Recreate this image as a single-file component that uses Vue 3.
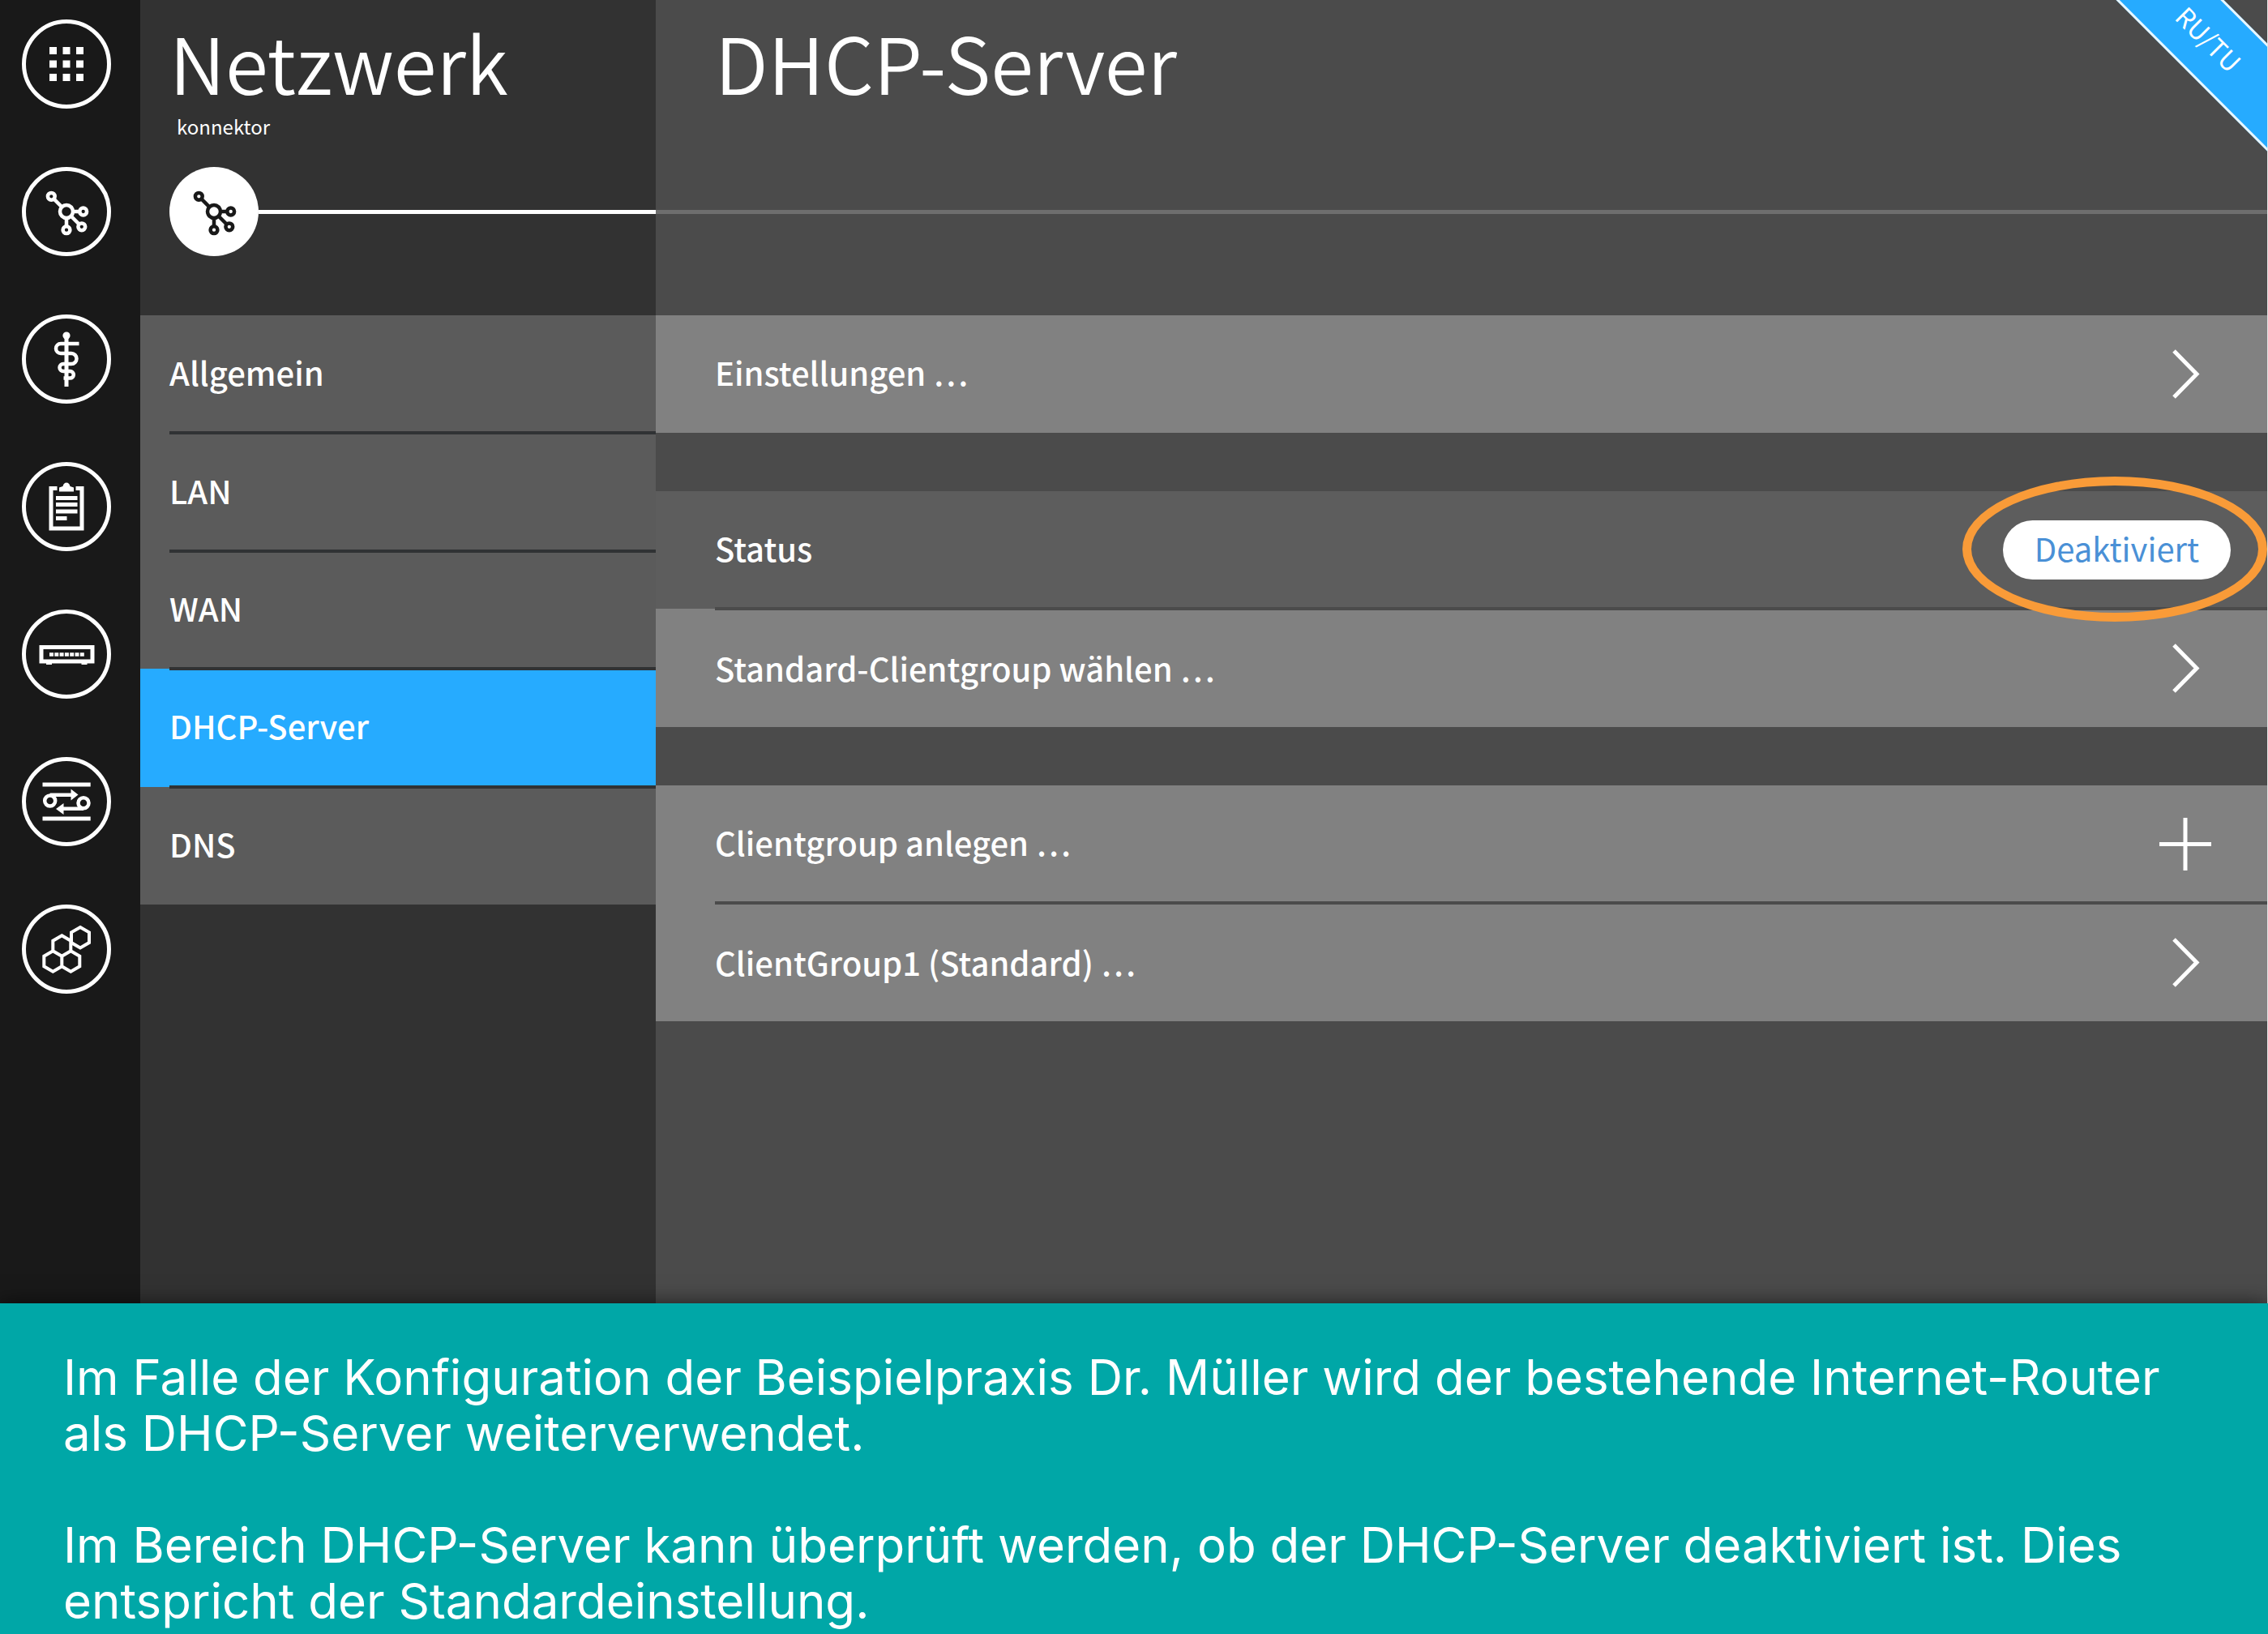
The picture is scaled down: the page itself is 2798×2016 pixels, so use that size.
<script setup>
import { h } from 'vue'

const hex = (cx, cy, r = 12.7) => {
  const w = r * 0.866
  return `M${cx} ${cy - r}L${cx + w} ${cy - r / 2}V${cy + r / 2}L${cx} ${cy + r}L${cx - w} ${cy + r / 2}V${cy - r / 2}Z`
}

const stroke = (d, width = 4) => ({ d, fill: 'none', stroke: 'currentColor', 'stroke-width': width })
const solid = (d) => ({ d, fill: 'currentColor' })
const ring = (cx, cy, r) => `M${cx - r} ${cy}a${r} ${r} 0 1 0 ${2 * r} 0a${r} ${r} 0 1 0 ${-2 * r} 0Z`

const icons = {
  apps: [solid([34, 50.5, 67].flatMap((y) => [34, 50.5, 67].map((x) => `M${x} ${y}h9v9h-9Z`)).join(''))],
  network: [
    stroke(ring(55, 55, 8), 4.5),
    stroke(ring(36.3, 36.3, 4.4) + ring(75.7, 55, 4.4) + ring(73.8, 73.8, 4.4) + ring(55, 77.7, 4.4), 4.5),
    stroke('M39.5 39.5L49 49M63 55H71.5M61 61L70.5 70.5M55 63V73.5', 4.5),
  ],
  medical: [
    solid(ring(55, 26, 4.6)),
    stroke('M55 26V89', 5),
    stroke('M70.5 36H48a6 6 0 0 0 0 12H61a6.5 6.5 0 0 1 0 13H51a4.5 4.5 0 0 0 0 9H59.5a4.3 4.3 0 0 1 0 8.6H51.5', 4.5),
  ],
  protocol: [
    stroke('M43.5 32.5H36V82H74V32.5H66.5', 5),
    solid('M46 36.5V31.5L50.5 30Q51.5 25.5 55 25.5T59.5 30L64 31.5V36.5Z'),
    stroke('M42 44.5H68.5M42 52.5H68.5M42 61H68.5M42 69.5H55.5', 5),
  ],
  device: [
    stroke('M24 46.5H87V64H24Z', 5),
    solid('M30 66h7v2h-7ZM73.5 66h7v2h-7Z'),
    { ...stroke('M34 55.5H77', 4.5), 'stroke-dasharray': '5 1.3' },
  ],
  transfer: [
    stroke('M25.5 34H84.7M25.5 76H84.7', 5),
    stroke(ring(34.7, 54, 6.5) + ring(76, 56.7, 6.5), 4.5),
    stroke('M34.7 46.7H62M76 63.7H50', 4.5),
    solid('M60.5 39.5L69.5 46.5L60.5 53.5ZM51.5 57L42 64L51.5 71Z'),
  ],
  cluster: [stroke(hex(72, 40.7) + hex(49.3, 51) + hex(38.3, 70) + hex(60.3, 70), 4)],
}

const Icon = (props) =>
  h('svg', { viewBox: '0 0 110 110', 'aria-hidden': 'true' }, icons[props.name].map((attrs) => h('path', attrs)))
Icon.props = ['name']

const modules = [
  { icon: 'apps', label: 'Übersicht' },
  { icon: 'network', label: 'Netzwerk' },
  { icon: 'medical', label: 'Praxis' },
  { icon: 'protocol', label: 'Protokoll' },
  { icon: 'device', label: 'Geräte' },
  { icon: 'transfer', label: 'Dienste' },
  { icon: 'cluster', label: 'System' },
]

const sections = ['Allgemein', 'LAN', 'WAN', 'DHCP-Server', 'DNS']
const current = 'DHCP-Server'

const arrow = 'M18 4L46 32.5L18 61'
const plus = 'M32 0V65M0 32.5H64'
const groups = [
  [{ label: 'Einstellungen …', mark: arrow }],
  [{ label: 'Status', status: 'Deaktiviert' }, { label: 'Standard-Clientgroup wählen …', mark: arrow }],
  [{ label: 'Clientgroup anlegen …', mark: plus }, { label: 'ClientGroup1 (Standard) …', mark: arrow }],
]
</script>

<template>
  <div class="page">
    <div class="console">
      <nav class="rail" aria-label="Module">
        <a v-for="m in modules" :key="m.icon" href="#" class="rail-link" :aria-label="m.label">
          <Icon :name="m.icon" />
        </a>
      </nav>

      <aside class="menu">
        <header class="head">
          <h1 class="title">Netzwerk</h1>
          <p class="host">konnektor</p>
          <div class="track">
            <span class="badge"><Icon name="network" /></span>
            <span class="line"></span>
          </div>
        </header>
        <nav class="sections" aria-label="Netzwerk">
          <a v-for="s in sections" :key="s" href="#" class="section" :class="{ active: s === current }">{{ s }}</a>
        </nav>
      </aside>

      <main class="content">
        <header class="head">
          <h2 class="title">DHCP-Server</h2>
          <div class="track"><span class="line faint"></span></div>
        </header>
        <div class="groups">
          <section v-for="(rows, i) in groups" :key="i" class="group">
            <template v-for="row in rows" :key="row.label">
              <div v-if="row.status" class="row plain">
                <span class="label">{{ row.label }}</span>
                <span class="marked">
                  <button type="button" class="pill">{{ row.status }}</button>
                </span>
              </div>
              <button v-else type="button" class="row">
                <span class="label">{{ row.label }}</span>
                <svg class="mark" viewBox="0 0 64 65" aria-hidden="true"><path :d="row.mark" /></svg>
              </button>
            </template>
          </section>
        </div>
        <div class="corner"><span class="ribbon">RU/TU</span></div>
      </main>
    </div>

    <footer class="caption">
      <p>
        Im Falle der Konfiguration der Beispielpraxis Dr. Müller wird der bestehende Internet-Router<br />
        als DHCP-Server weiterverwendet.
      </p>
      <p>
        Im Bereich DHCP-Server kann überprüft werden, ob der DHCP-Server deaktiviert ist. Dies<br />
        entspricht der Standardeinstellung.
      </p>
    </footer>
  </div>
</template>

<style>
body {
  margin: 0;
  background: #00a7a7;
}
</style>

<style scoped>
.page {
  display: flex;
  flex-direction: column;
  min-height: 100vh;
  color: #fff;
  font-family: "Noto Sans CJK SC", "Noto Sans", sans-serif;
}
.console {
  display: flex;
  flex: 1;
  border-right: 1px solid #e6e6e6;
  background: #4b4b4b;
}
.rail {
  display: flex;
  flex-direction: column;
  align-items: center;
  gap: 72px;
  width: 164px;
  padding: 24px 9px 0 0;
  flex: none;
  background: #191919;
}
.rail-link {
  box-sizing: border-box;
  width: 110px;
  height: 110px;
  border: 5px solid #fff;
  border-radius: 50%;
  color: #fff;
}
.rail-link svg {
  display: block;
  margin: -5px;
}
.menu {
  flex: none;
  width: 636px;
  background: #323232;
}
.head {
  position: relative;
  box-sizing: border-box;
  height: 389px;
  padding: 24px 36px 0;
}
.title,
.host,
.caption p {
  margin: 0;
}
.title {
  font-size: 96px;
  line-height: 104px;
  font-weight: 350;
}
.host {
  padding-left: 9px;
  font-size: 24px;
  line-height: 56px;
}
.track {
  position: absolute;
  left: 0;
  right: 0;
  top: 206px;
  display: flex;
  align-items: center;
  height: 110px;
}
.badge {
  width: 110px;
  height: 110px;
  margin-left: 36px;
  border-radius: 50%;
  background: #fff;
  color: #191919;
}
.badge svg {
  display: block;
}
.line {
  flex: 1;
  height: 5px;
  background: #fff;
}
.faint {
  background: #6e6e6e;
}
.sections {
  display: grid;
  grid-auto-rows: 1fr;
  height: 727px;
}
.section,
.row {
  position: relative;
  display: flex;
  align-items: center;
  color: #fff;
  font-size: 40px;
  font-weight: 500;
}
.section {
  padding: 0 36px 5px;
  background: #5b5b5b;
  text-decoration: none;
}
.section.active {
  background: #26abff;
}
.section + .section::before,
.row + .row::before {
  content: "";
  position: absolute;
  top: -2px;
  right: 0;
  left: 36px;
  height: 4px;
  background: #303234;
}
.row + .row::before {
  left: 73px;
  background: #4b4b4b;
}
.content {
  position: relative;
  flex: 1;
  min-width: 0;
}
.content .head {
  padding-left: 73px;
}
.groups {
  display: flex;
  flex-direction: column;
  gap: 72px;
}
.row {
  box-sizing: border-box;
  justify-content: space-between;
  width: 100%;
  height: 145px;
  padding: 0 69px 0 73px;
  border: 0;
  background: #818181;
  font-family: inherit;
  text-align: left;
}
.row + .row {
  height: 146px;
}
.label {
  padding-bottom: 5px;
}
.row + .row .label {
  padding-bottom: 0;
}
.row.plain {
  padding-right: 45px;
  background: #5d5d5d;
}
.mark {
  width: 64px;
  height: 65px;
  fill: none;
  stroke: #fff;
  stroke-width: 5;
}
.marked {
  position: relative;
  z-index: 1;
}
.marked::after {
  content: "";
  position: absolute;
  inset: -54px -45px -52px -50px;
  border: 11px solid #f99b38;
  border-radius: 50%;
  pointer-events: none;
}
.pill {
  display: block;
  width: 281px;
  height: 73px;
  padding: 0 0 5px;
  border: 0;
  border-radius: 37px;
  background: #fff;
  color: #4a90d6;
  font: 400 40px/68px "Noto Sans CJK SC", "Noto Sans", sans-serif;
}
.corner {
  position: absolute;
  top: 0;
  right: 0;
  width: 240px;
  height: 240px;
  overflow: hidden;
}
.ribbon {
  position: absolute;
  top: 1px;
  right: -128px;
  box-sizing: border-box;
  width: 400px;
  height: 94px;
  border: solid #e8f6ff;
  border-width: 3px 0;
  background: #26abff;
  font-size: 32px;
  line-height: 86px;
  text-align: center;
  transform: rotate(45deg);
}
.caption {
  position: relative;
  display: flex;
  flex-direction: column;
  gap: 69px;
  padding: 57px 78px 6px;
  background: #00a7a7;
  box-shadow: 0 0 24px rgba(0, 0, 0, 0.6);
  font-family: Inter, sans-serif;
  font-size: 60px;
  line-height: 69px;
  white-space: nowrap;
}
</style>
